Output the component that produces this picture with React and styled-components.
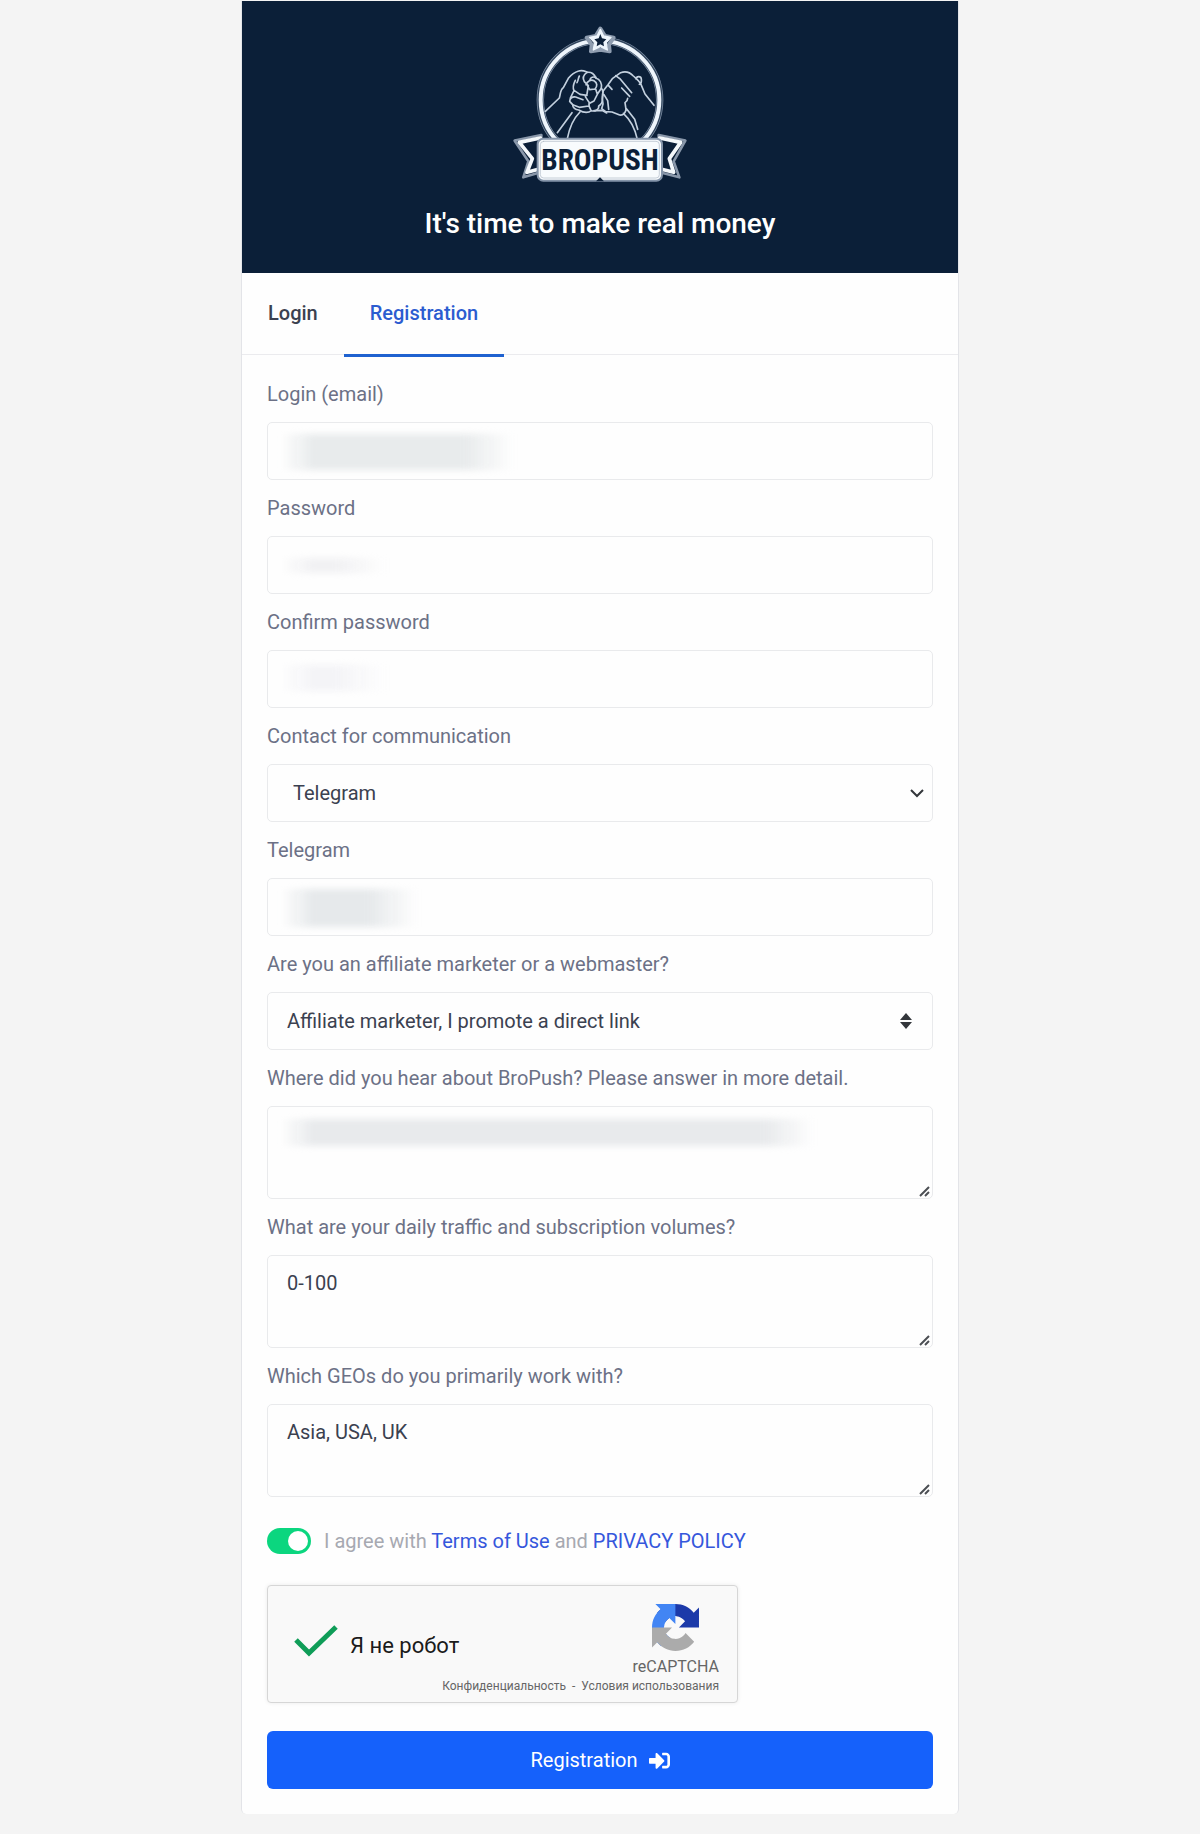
import React from "react";
import styled, { createGlobalStyle } from "styled-components";
import { FaSignInAlt } from "react-icons/fa";

const Global = createGlobalStyle`
  *, *::before, *::after { box-sizing: border-box; }
  body {
    margin: 0;
    background: #f4f4f4;
    font-family: Roboto, "Liberation Sans", sans-serif;
    font-size: 20px;
    color: #3b4150;
  }
  input, select, textarea, button { font: inherit; color: inherit; }
`;

const Page = styled.main`
  padding: 1px 16px 20px;
`;

const Card = styled.div`
  max-width: 718px;
  margin: 0 auto;
  background: #fefefe;
  border: solid #e3e4e8;
  border-width: 0 1px;
  border-radius: 0 0 5px 5px;
`;

const Header = styled.header`
  display: flex;
  flex-direction: column;
  align-items: center;
  gap: 24px;
  padding: 22px 24px 32px;
  background: #0b1f38;
`;

const Title = styled.h1`
  margin: 0;
  font-size: 28px;
  line-height: 34px;
  font-weight: 500;
  color: #fff;
`;

const Tabs = styled.nav`
  display: flex;
  height: 82px;
  border-bottom: 1px solid #ebebee;
`;

const Tab = styled.a`
  height: 84px;
  padding: 26px 26px 0;
  line-height: 28px;
  font-weight: 500;
  text-decoration: none;
  color: ${(p) => (p.$active ? "#2b5cd0" : "#3b4150")};
  border-bottom: 3px solid ${(p) => (p.$active ? "#1f62d0" : "transparent")};
`;

const Form = styled.form`
  padding: 25px;
`;

const Field = styled.div`
  display: flex;
  flex-direction: column;
  gap: 13px;
  margin-bottom: 14px;
`;

const Label = styled.label`
  line-height: 29px;
  color: #6c7186;
`;

const Control = styled.div`
  position: relative;
  display: flex;
`;

const box = `
  width: 100%;
  margin: 0;
  background: #fefefe;
  border: 1px solid #e9eaec;
  border-radius: 5px;
  outline: none;
`;

const TextInput = styled.input`
  ${box}
  height: 58px;
  padding: 0 20px;
`;

const Select = styled.select`
  ${box}
  height: 58px;
  padding: 0 48px 0 ${(p) => (p.$inset ? "25px" : "19px")};
  appearance: none;
`;

const TextArea = styled.textarea`
  ${box}
  display: block;
  height: 93px;
  padding: 13px 19px;
  line-height: 28px;
  resize: vertical;

  &::-webkit-resizer { background: transparent; }
`;

const Grip = styled.svg`
  position: absolute;
  right: 2px;
  bottom: 2px;
  pointer-events: none;
`;

const SelectIcon = styled.svg`
  position: absolute;
  right: ${(p) => (p.$inset ? "8px" : "20px")};
  top: 50%;
  transform: translateY(-50%);
  pointer-events: none;
`;

const Redaction = styled.span`
  position: absolute;
  left: 14px;
  top: ${(p) => p.$top}px;
  width: ${(p) => p.$width}px;
  height: ${(p) => p.$height}px;
  background: linear-gradient(to right, transparent, ${(p) => p.$tone} 32px, ${(p) => p.$tone} calc(100% - 48px), transparent);
  filter: blur(3px);
  pointer-events: none;
`;

const Agreement = styled.div`
  display: flex;
  align-items: center;
  gap: 13px;
  margin: 31px 0;
  line-height: 26px;
  color: #a7a9b1;
`;

const Switch = styled.input`
  appearance: none;
  flex: none;
  width: 44px;
  height: 26px;
  margin: 0;
  padding: 3px;
  border-radius: 13px;
  background: #c9ccd3;

  &::before {
    content: "";
    display: block;
    width: 20px;
    height: 20px;
    border-radius: 50%;
    background: #fff;
  }
  &:checked { background: #0bd67f; }
  &:checked::before { margin-left: auto; }
`;

const Link = styled.a`
  color: #3557dc;
  text-decoration: none;
`;

const Captcha = styled.section`
  display: flex;
  flex-direction: column;
  max-width: 471px;
  height: 118px;
  padding: 18px 18px 6px 26px;
  background: #f9f9f9;
  border: 1px solid #d6d6d6;
  border-radius: 4px;
  box-shadow: 0 0 4px rgba(0, 0, 0, 0.08);
`;

const CaptchaTop = styled.div`
  display: flex;
  justify-content: space-between;
`;

const CaptchaLabel = styled.label`
  display: flex;
  align-items: center;
  gap: 12px;
  font-size: 22px;
  line-height: 28px;
  color: #1b1b1b;

  span { padding-top: 10px; }
`;

const HiddenCheck = styled.input`
  position: absolute;
  opacity: 0;
  width: 44px;
  height: 34px;
  margin: 0;
`;

const Brand = styled.div`
  display: flex;
  flex-direction: column;
  align-items: center;
  gap: 6px;
  font-size: 16px;
  line-height: 20px;
  color: #666;
`;

const CaptchaLinks = styled.div`
  display: flex;
  justify-content: flex-end;
  gap: 6px;
  font-size: 12px;
  line-height: 18px;
  color: #666;

  a { color: inherit; text-decoration: none; }
`;

const Submit = styled.button`
  display: flex;
  align-items: center;
  justify-content: center;
  gap: 11px;
  width: 100%;
  height: 58px;
  margin-top: 28px;
  border: 0;
  border-radius: 6px;
  background: #1561fb;
  color: #fff;
`;

function Logo() {
  return (
    <svg width="180" height="160" viewBox="30 39 540 480" role="img" aria-label="BroPush">
      <g fill="none" strokeLinejoin="round" strokeLinecap="round">
        <circle cx="300" cy="270" r="179" stroke="#8494a9" strokeWidth="22" />
        <circle cx="300" cy="270" r="179" stroke="#33475f" strokeWidth="18" />
        <circle cx="300" cy="270" r="178" stroke="#eef5fc" strokeWidth="12" />
        <path d="M301 56l14 22 26 5-14 21 2 20-28-5-28 5 2-20-15-21 27-5z" fill="#0b1f38" stroke="#8f9db0" strokeWidth="12" />
        <path d="M301 58l10 20 22 4-14 16 3 22-21-10-21 10 3-22-14-16 22-4z" fill="#eef5fc" stroke="#eef5fc" strokeWidth="4" />
        <path d="M301 72l5 13 13 3-9 9 2 12-11-6-11 6 2-12-9-9 13-3z" fill="#0b1f38" />
        <g stroke="#c3d0de" strokeWidth="5">
          <path d="M136 304l42-40c4-13 2-24 12-31l15-28c8-10 17-18 31-22 12-4 19 1 26 4 12-2 22 6 25 17 14 3 19 17 17 30 8 10 5 22 3 32 1 13-4 18-11 22 2 9-10 18-22 14-10 8-26 5-38-2-10 0-18-7-18-16l-9-10c1-10 8-14 18-13l22 8" />
          <path d="M226 211c-5 11-10 18-4 31l-11 22M238 198c-4 7-2 11-7 20M222 241l18 12 21 3M261 187c-10 7-14 17-8 28l12 12-4 25M258 224c4-11 15-17 24-12 11 6 10 17 3 25l-16 2-8-15M270 209c1-8 10-9 18-7M287 237l5 16-10 20-13 7-13-20M304 235l-12 18M218 284l20 8 28-4M272 299c-5-8-7-13-4-22M240 306c-22 22-32 48-38 80M216 308l-44 60M282 302l24-1 14 8" />
          <path d="M310 242l14-18 14-19 24-17c14-5 29 0 38 10 9 8 16 13 22 23l13 31 27 34M310 242c-5 16-3 29-1 40l-4 14 12 9 19 1 23 9c11 2 18-7 19-17l-3-20c6-4 8-8 8-13M312 254l11 18 3 26M325 226l11 12M347 197l11 8M360 206l35 42M365 234l24 25M408 207c2-10 15-9 16 0 1 8 0 14-6 16M370 310c22 20 35 44 42 78M380 297l24 31 9 30" />
        </g>
        <path d="M44 392l80-17v111l-54 16 15-48zM556 392l-80-17v111l62 16-17-48z" fill="#0b1f38" stroke="#8997aa" strokeWidth="8" />
        <path d="M58 397l63-13v92l-40 11 16-41zM542 397l-63-13v92l42 11-13-41z" stroke="#f4f8fb" strokeWidth="11" />
        <rect x="113" y="386" width="373" height="126" rx="17" fill="#f8fbfd" stroke="#8595aa" strokeWidth="6" />
        <rect x="121" y="394" width="357" height="110" rx="10" stroke="#adb8c5" strokeWidth="2" />
        <path d="M288 514l12-12 12 12z" fill="#0b1f38" />
      </g>
      <text
        x="300"
        y="481"
        textAnchor="middle"
        fontFamily="'Roboto Condensed', 'Liberation Sans Narrow', Roboto, sans-serif"
        fontWeight="700"
        fontSize="88"
        fill="#0b1f38"
      >
        BROPUSH
      </text>
    </svg>
  );
}

function Chevron() {
  return (
    <SelectIcon $inset width="16" height="12" viewBox="0 0 16 12" fill="none" stroke="#33363b" strokeWidth="2">
      <path d="M2 3l6 6 6-6" />
    </SelectIcon>
  );
}

function Sorter() {
  return (
    <SelectIcon width="14" height="16" viewBox="0 0 14 16" fill="#33363b">
      <path d="M1 7l6-7 6 7zM1 9h12l-6 7z" />
    </SelectIcon>
  );
}

function ResizeGrip() {
  return (
    <Grip width="12" height="12" viewBox="0 0 12 12" stroke="#4c4f54" strokeWidth="2" aria-hidden="true">
      <path d="M1 11L10 2M6 11l4-4" />
    </Grip>
  );
}

function RecaptchaMark() {
  return (
    <svg width="47" height="47" viewBox="0 0 64 64" aria-hidden="true">
      <path fill="#1c3aa9" d="M64 31.955l-.033-1.37V4.687l-7.16 7.16C50.948 4.674 42.033.093 32.05.093c-10.4 0-19.622 4.96-25.458 12.64l11.736 11.86a15.55 15.55 0 0 1 4.754-5.334c2.05-1.6 4.952-2.906 8.968-2.906.485 0 .86.057 1.135.163 4.976.393 9.288 3.14 11.828 7.124l-8.307 8.307L64 31.953" />
      <path fill="#4285f4" d="M31.862.094l-1.37.033H4.594l7.16 7.16C4.58 13.147 0 22.06 0 32.046c0 10.4 4.96 19.622 12.64 25.458L24.5 45.768a15.55 15.55 0 0 1-5.334-4.754c-1.6-2.05-2.906-4.952-2.906-8.968 0-.485.057-.86.163-1.135.393-4.976 3.14-9.288 7.124-11.828l8.307 8.307L31.86.095" />
      <path fill="#ababab" d="M.001 32.045l.033 1.37v25.898l7.16-7.16c5.86 7.173 14.774 11.754 24.76 11.754 10.4 0 19.622-4.96 25.458-12.64L45.676 39.41a15.55 15.55 0 0 1-4.754 5.334c-2.05 1.6-4.952 2.906-8.968 2.906-.485 0-.86-.057-1.135-.163-4.976-.393-9.288-3.14-11.828-7.124l8.307-8.307c-10.522.04-22.4.066-27.295-.005" />
    </svg>
  );
}

function Row({ id, label, children }) {
  return (
    <Field>
      <Label htmlFor={id}>{label}</Label>
      <Control>{children}</Control>
    </Field>
  );
}

export default function App() {
  return (
    <>
      <Global />
      <Page>
        <Card>
          <Header>
            <Logo />
            <Title>It's time to make real money</Title>
          </Header>
          <Tabs>
            <Tab href="#login">Login</Tab>
            <Tab href="#registration" $active aria-current="page">Registration</Tab>
          </Tabs>
          <Form onSubmit={(e) => e.preventDefault()}>
            <Row id="email" label="Login (email)">
              <TextInput id="email" type="email" />
              <Redaction $top={12} $width={232} $height={36} $tone="#e8ebec" />
            </Row>
            <Row id="password" label="Password">
              <TextInput id="password" type="password" />
              <Redaction $top={22} $width={104} $height={15} $tone="#f1f1f3" />
            </Row>
            <Row id="confirm" label="Confirm password">
              <TextInput id="confirm" type="password" />
              <Redaction $top={15} $width={104} $height={26} $tone="#f4f4f7" />
            </Row>
            <Row id="contact" label="Contact for communication">
              <Select id="contact" $inset>
                <option>Telegram</option>
              </Select>
              <Chevron />
            </Row>
            <Row id="telegram" label="Telegram">
              <TextInput id="telegram" />
              <Redaction $top={11} $width={136} $height={38} $tone="#e6e9eb" />
            </Row>
            <Row id="role" label="Are you an affiliate marketer or a webmaster?">
              <Select id="role">
                <option>Affiliate marketer, I promote a direct link</option>
              </Select>
              <Sorter />
            </Row>
            <Row id="source" label="Where did you hear about BroPush? Please answer in more detail.">
              <TextArea id="source" />
              <Redaction $top={13} $width={532} $height={27} $tone="#e8eaec" />
              <ResizeGrip />
            </Row>
            <Row id="volume" label="What are your daily traffic and subscription volumes?">
              <TextArea id="volume" defaultValue="0-100" />
              <ResizeGrip />
            </Row>
            <Row id="geos" label="Which GEOs do you primarily work with?">
              <TextArea id="geos" defaultValue="Asia, USA, UK" />
              <ResizeGrip />
            </Row>
            <Agreement>
              <Switch id="agree" type="checkbox" defaultChecked />
              <label htmlFor="agree">
                I agree with <Link href="#terms">Terms of Use</Link> and <Link href="#privacy">PRIVACY POLICY</Link>
              </label>
            </Agreement>
            <Captcha aria-label="reCAPTCHA">
              <CaptchaTop>
                <CaptchaLabel>
                  <HiddenCheck type="checkbox" defaultChecked />
                  <svg width="44" height="34" viewBox="0 0 44 34" fill="none" stroke="#0f9d58" strokeWidth="5" aria-hidden="true">
                    <path d="M2 16l13 13L42 3" />
                  </svg>
                  <span>Я не робот</span>
                </CaptchaLabel>
                <Brand>
                  <RecaptchaMark />
                  reCAPTCHA
                </Brand>
              </CaptchaTop>
              <CaptchaLinks>
                <a href="#captcha-privacy">Конфиденциальность</a>
                <span>-</span>
                <a href="#captcha-terms">Условия использования</a>
              </CaptchaLinks>
            </Captcha>
            <Submit type="submit">
              Registration
              <FaSignInAlt size={21} aria-hidden="true" />
            </Submit>
          </Form>
        </Card>
      </Page>
    </>
  );
}
